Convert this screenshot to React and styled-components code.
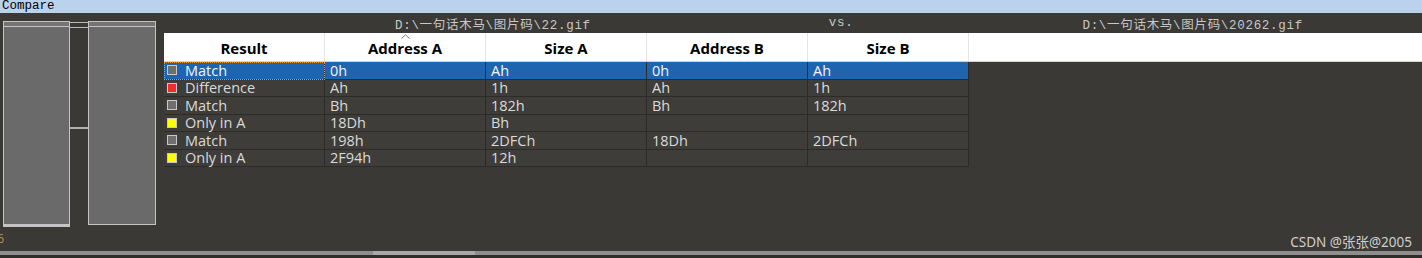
import React from "react";
import styled, { createGlobalStyle } from "styled-components";

const Global = createGlobalStyle`
  html, body { margin: 0; padding: 0; background: #3a3935; }
  #root { width: 1422px; height: 258px; }
`;

const Window = styled.div`
  position: relative;
  width: 1422px;
  height: 258px;
  overflow: hidden;
  display: flex;
  flex-direction: column;
  background: #3a3935;
`;

const TitleBar = styled.div`
  height: 13px;
  flex: none;
  background: #bad2ec;
  color: #000;
  font: 12.5px/13px "Liberation Mono", "DejaVu Sans Mono", monospace;
  padding-left: 2px;
`;

const Body = styled.div`
  flex: 1;
  display: flex;
  min-height: 0;
`;

const LeftPane = styled.div`
  width: 164px;
  flex: none;
  display: flex;
  align-items: flex-start;
  padding: 8px 0 0 3px;
  box-sizing: border-box;
  position: relative;
`;

const Panel = styled.div`
  width: ${(p) => p.$w}px;
  height: ${(p) => p.$h}px;
  box-sizing: border-box;
  background: #6a6a6a;
  border: 1px solid #c4c4c4;
  border-bottom-width: ${(p) => p.$bottom}px;
  display: flex;
  flex-direction: column;
`;

const PanelHead = styled.div`
  height: 4px;
  background: #747474;
  border-bottom: 1px solid #c4c4c4;
`;

const Connector = styled.div`
  width: 18px;
  flex: none;
  display: flex;
  flex-direction: column;
`;

const ConnectorTop = styled.div`
  margin-top: 1px;
  height: 4px;
  border-top: 1px solid #b8b8b8;
  border-bottom: 1px solid #b8b8b8;
`;

const ConnectorMid = styled.div`
  margin-top: 99px;
  height: 0;
  border-top: 2px solid #b0b0b0;
`;

const Clip = styled.span`
  position: absolute;
  left: 0;
  bottom: 6px;
  width: 4px;
  overflow: hidden;
  font: 12px/12px "Open Sans", sans-serif;
  color: #b89058;
  direction: rtl;
`;

const RightPane = styled.div`
  flex: 1;
  display: flex;
  flex-direction: column;
  min-width: 0;
`;

const PathBar = styled.div`
  height: 20px;
  flex: none;
  display: flex;
  align-items: center;
  font: 12.5px "Liberation Mono", "Noto Sans CJK SC", monospace;
  letter-spacing: 0.7px;
  color: #c8c8c8;
  white-space: nowrap;
`;

const PathText = styled.span`
  margin-left: ${(p) => p.$ml}px;
`;

const Header = styled.div`
  height: 29px;
  flex: none;
  background: #fff;
  display: flex;
  border-bottom: 1px solid #d4d4d4;
  box-sizing: border-box;
`;

const HeadCell = styled.div`
  position: relative;
  width: 161px;
  flex: none;
  box-sizing: border-box;
  border-right: 1px solid #e5e5e5;
  display: flex;
  align-items: center;
  justify-content: center;
  padding-top: 2px;
  font: 700 15px "Open Sans", sans-serif;
  color: #000;
`;

const SortArrow = styled.svg`
  position: absolute;
  top: 1px;
  left: 76px;
`;

const Grid = styled.div`
  display: grid;
  grid-template-columns: repeat(5, 161px);
  grid-auto-rows: 17.5px;
  width: 805px;
`;

const Cell = styled.div`
  box-sizing: border-box;
  border-right: 1px solid #2c2b28;
  border-bottom: 1px solid #2c2b28;
  background: ${(p) => (p.$sel ? "#1f64ae" : "#3e3d39")};
  color: ${(p) => (p.$sel ? "#f4f4f4" : "#dadada")};
  font: 14.5px/17px "Open Sans", sans-serif;
  padding-left: 5px;
  display: flex;
  align-items: center;
  white-space: nowrap;
  ${(p) => p.$focus && "outline: 1px dotted #e69a3c; outline-offset: -1px;"}
`;

const ResultCell = styled(Cell)`
  padding-left: 3px;
  gap: 8px;
`;

const Swatch = styled.span`
  width: 10px;
  height: 10px;
  flex: none;
  box-sizing: border-box;
  border: 1px solid #c8c8c8;
  background: ${(p) => p.$c};
`;

const Scrollbar = styled.div`
  height: 7px;
  flex: none;
  display: flex;
  flex-direction: column;
  background: #2e2d2a;
`;

const Track = styled.div`
  height: 4px;
  background: #8e8e8e;
  display: flex;
`;

const Thumb = styled.div`
  margin-left: 373px;
  width: 102px;
  background: #a9a9a9;
`;

const Watermark = styled.div`
  position: absolute;
  right: 10px;
  bottom: 7px;
  font: 13.5px "Noto Sans", "Noto Sans CJK SC", sans-serif;
  color: #cfcfcf;
`;

const COLORS = { Match: "#6f6f6f", Difference: "#ee2c2c", "Only in A": "#ffff00" };

const rows = [
  ["Match", "0h", "Ah", "0h", "Ah"],
  ["Difference", "Ah", "1h", "Ah", "1h"],
  ["Match", "Bh", "182h", "Bh", "182h"],
  ["Only in A", "18Dh", "Bh", "", ""],
  ["Match", "198h", "2DFCh", "18Dh", "2DFCh"],
  ["Only in A", "2F94h", "12h", "", ""],
];

const heads = ["Result", "Address A", "Size A", "Address B", "Size B"];

export default function App() {
  return (
    <>
      <Global />
      <Window>
        <TitleBar>Compare</TitleBar>
        <Body>
          <LeftPane>
            <Panel $w={67} $h={206} $bottom={3}>
              <PanelHead />
            </Panel>
            <Connector>
              <ConnectorTop />
              <ConnectorMid />
            </Connector>
            <Panel $w={68} $h={204} $bottom={1}>
              <PanelHead />
            </Panel>
            <Clip>6</Clip>
          </LeftPane>
          <RightPane>
            <PathBar>
              <PathText $ml={231}>D:\一句话木马\图片码\22.gif</PathText>
              <PathText $ml={238}>vs.</PathText>
              <PathText $ml={229}>D:\一句话木马\图片码\20262.gif</PathText>
            </PathBar>
            <Header>
              {heads.map((h, i) => (
                <HeadCell key={h}>
                  {i === 1 && (
                    <SortArrow width="9" height="5" viewBox="0 0 9 5">
                      <polyline points="0.5,4.5 4.5,0.8 8.5,4.5" fill="none" stroke="#7a7a7a" strokeWidth="1" />
                    </SortArrow>
                  )}
                  {h}
                </HeadCell>
              ))}
            </Header>
            <Grid>
              {rows.map((r, ri) =>
                r.map((v, ci) =>
                  ci === 0 ? (
                    <ResultCell key={`${ri}-${ci}`} $sel={ri === 0} $focus={ri === 0}>
                      <Swatch $c={COLORS[v]} />
                      {v}
                    </ResultCell>
                  ) : (
                    <Cell key={`${ri}-${ci}`} $sel={ri === 0}>
                      {v}
                    </Cell>
                  )
                )
              )}
            </Grid>
          </RightPane>
        </Body>
        <Scrollbar>
          <Track>
            <Thumb />
          </Track>
        </Scrollbar>
        <Watermark>CSDN @张张@2005</Watermark>
      </Window>
    </>
  );
}
